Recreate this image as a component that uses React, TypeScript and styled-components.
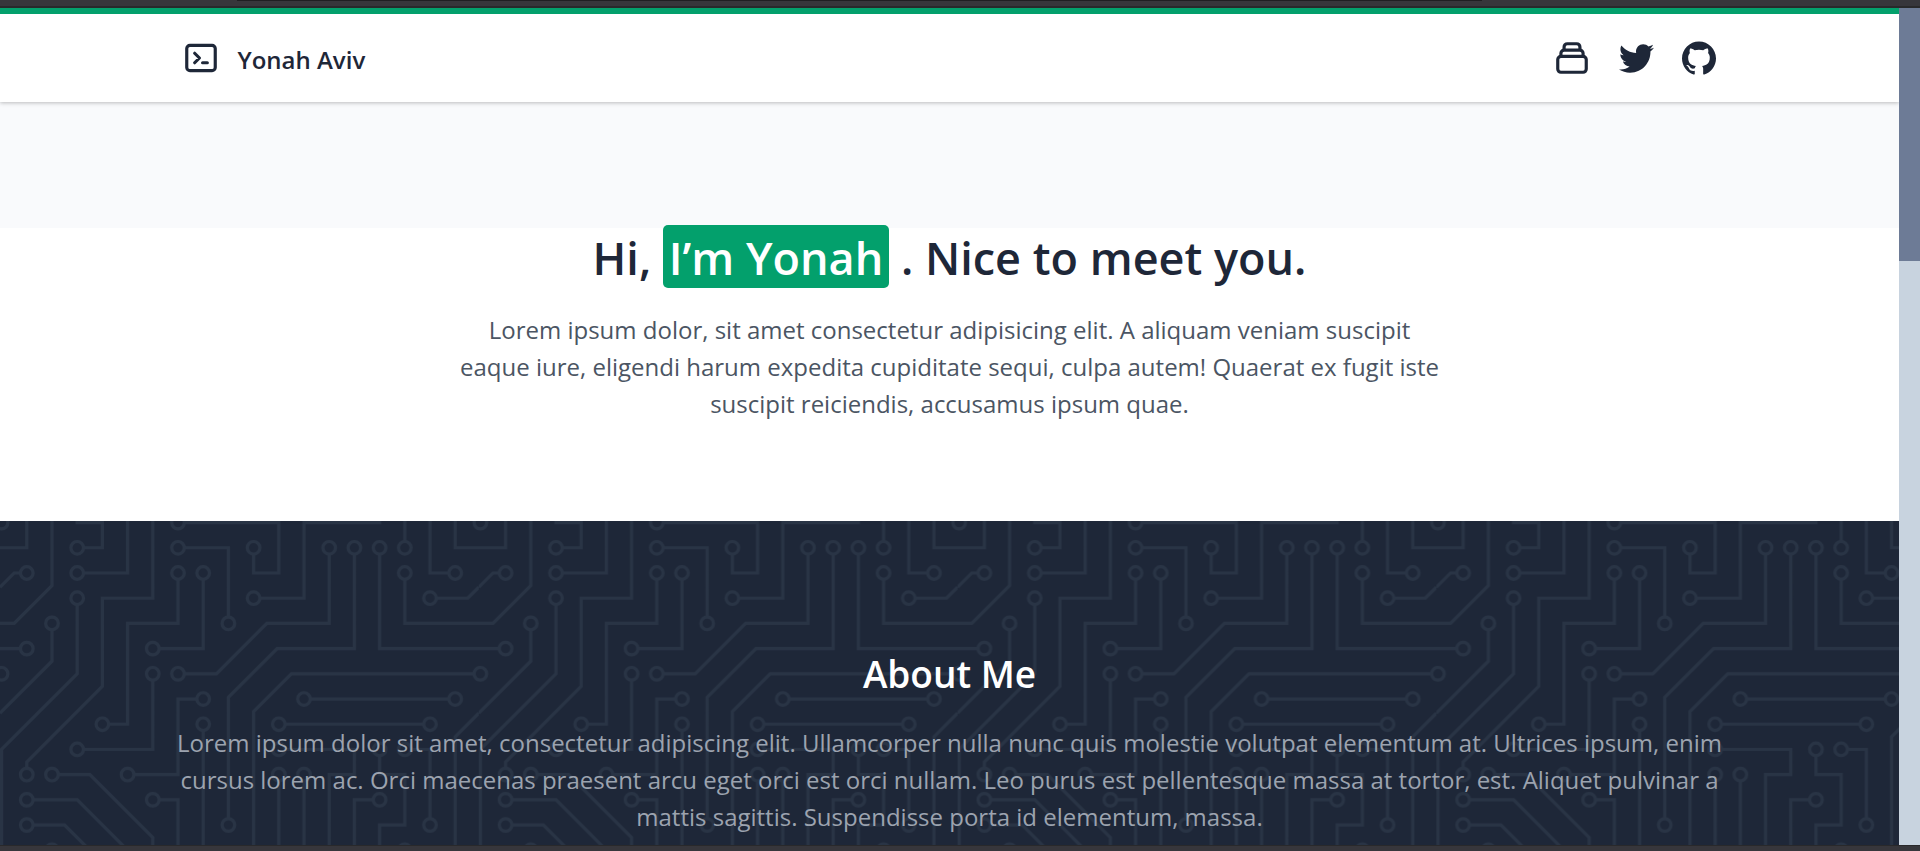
import React from "react";
import styled, { createGlobalStyle } from "styled-components";

const color = {
  chrome: "#37363b",
  chromeEdge: "#29292b",
  green: "#03a06c",
  ink: "#1e2738",
  trace: "#293445",
  body: "#4b5563",
  muted: "#9ca3af",
  pale: "#f9fafc",
  thumb: "#6d7b96",
  track: "#c8d3df",
};

const GlobalStyle = createGlobalStyle`
  * { box-sizing: border-box; }
  body {
    margin: 0;
    background: #ffffff;
    color: ${color.ink};
    font-family: "Segoe UI", "Open Sans", "Noto Sans", sans-serif;
  }
  h1, h2, p { margin: 0; }
`;

const Shell = styled.div`
  display: flex;
  flex-direction: column;
  height: 100vh;
  overflow: hidden;
`;

const TopEdge = styled.div`
  flex: none;
  height: 8px;
  padding: 0 438px 0 237px;
  background: ${color.chrome};
  border-bottom: 2px solid ${color.chromeEdge};
`;

const TopEdgeLine = styled.div`
  height: 1px;
  background: #1f1f22;
`;

const BottomEdge = styled.div`
  flex: none;
  height: 6px;
  background: ${color.chrome};
  border-top: 1px solid ${color.chromeEdge};
`;

const Viewport = styled.div`
  display: flex;
  flex: 1;
  min-height: 0;
`;

const Page = styled.div`
  display: flex;
  flex-direction: column;
  flex: 1;
  min-width: 0;
  overflow: hidden;
  background: #ffffff;
`;

const ScrollTrack = styled.div`
  flex: none;
  width: 21px;
  background: ${color.track};
`;

const ScrollThumb = styled.div`
  height: 253px;
  background: ${color.thumb};
`;

const Header = styled.header`
  position: relative;
  z-index: 1;
  flex: none;
  border-top: 6px solid ${color.green};
  background: #ffffff;
  box-shadow: 0 1px 4px rgba(0, 0, 0, 0.25);
`;

const HeaderRow = styled.div`
  display: flex;
  align-items: center;
  justify-content: space-between;
  width: 100%;
  max-width: 1536px;
  height: 88px;
  margin: 0 auto;
  padding-right: 2px;
`;

const Brand = styled.a`
  display: flex;
  align-items: center;
  gap: 18px;
  color: inherit;
  text-decoration: none;
`;

const BrandName = styled.span`
  padding-top: 3px;
  font-size: 24px;
  font-weight: 600;
  line-height: 36px;
`;

const Links = styled.nav`
  display: flex;
  align-items: center;
  gap: 28px;
`;

const IconLink = styled.a`
  display: flex;
  color: inherit;
`;

const OutlineIcon = styled.svg`
  width: 38px;
  height: 38px;
  fill: none;
  stroke: currentColor;
  stroke-width: 2;
  stroke-linecap: round;
  stroke-linejoin: round;
`;

const LogoIcon = styled.svg<{ $size: number }>`
  width: ${({ $size }) => $size}px;
  height: ${({ $size }) => $size}px;
  fill: currentColor;
`;

const Spacer = styled.div`
  flex: none;
  height: 126px;
  background: ${color.pale};
`;

const Hero = styled.section`
  flex: none;
  padding: 0 24px 99px;
  text-align: center;
`;

const HeroTitle = styled.h1`
  font-size: 45px;
  font-weight: 600;
  line-height: 60px;
`;

const Highlight = styled.span`
  padding: 2px 6px 0;
  border-radius: 5px;
  background: ${color.green};
  color: #ffffff;
`;

const HeroText = styled.p`
  max-width: 980px;
  margin: 23px auto 0;
  color: ${color.body};
  font-size: 24px;
  line-height: 37px;
`;

const About = styled.section`
  position: relative;
  flex: 1 0 auto;
  padding: 128px 24px 0;
  background: ${color.ink};
  text-align: center;
`;

const Backdrop = styled.svg`
  position: absolute;
  inset: 0;
  width: 100%;
  height: 100%;
`;

const AboutContent = styled.div`
  position: relative;
  width: 100%;
  max-width: 1560px;
  margin: 0 auto;
`;

const AboutTitle = styled.h2`
  color: #ffffff;
  font-size: 37px;
  font-weight: 600;
  line-height: 50px;
`;

const AboutText = styled.p`
  margin-top: 25px;
  color: ${color.muted};
  font-size: 24px;
  line-height: 37px;
`;

// Pads sit on a 16 unit grid inside a 304 unit tile: [column, row].
const pads: [number, number][] = [
  [0, 0], [19, 0], [7, 0], [0, 19], [19, 19], [7, 19],
  [3, 1], [7, 1], [10, 1], [13, 1], [14, 1], [15, 1], [16, 1],
  [1, 2], [3, 2], [7, 2], [8, 2], [16, 2], [18, 2],
  [3, 3], [10, 3], [17, 3], [2, 4], [9, 4], [1, 5], [6, 5],
  [0, 6], [6, 6], [7, 6], [19, 6], [8, 7], [12, 7], [18, 7],
  [4, 8], [8, 8], [11, 8], [17, 8],
  [3, 9], [11, 9], [15, 9], [16, 9],
  [1, 10], [2, 10], [5, 10], [11, 10], [12, 10],
  [1, 11], [6, 11], [15, 11], [1, 12], [9, 12], [17, 12],
  [2, 13], [16, 13],
  [3, 14], [8, 14], [9, 14], [10, 14], [12, 14], [16, 14],
  [3, 15], [7, 15], [12, 15], [16, 15], [3, 16], [13, 16],
  [13, 17], [4, 18], [14, 18],
];

// Copper traces between the pads, as centre lines.
const traces = [
  "M49 225H0 M209 273H81 M257 225H304 M257 241H304",
  "M273 129H177 M17 81H0 M193 113H289 M257 17V0",
  "M193 225V161 M241 17V81H304 M257 33V65H304",
  "M129 129V209H145V225 M129 113H113V161H81",
  "M113 241H177V161 M97 177H113V225H129",
  "M65 289V273H49V304 M241 177H225V273H273V304",
  "M257 145H273V193 M193 241H209V161H225V145H177",
  "M289 33H273V0 M97 97V145H49 M49 33H81V0",
  "M113 33V65H81V129H65 M97 81H129V33 M113 17H145V65",
  "M225 289H97V304 M241 145V161H257V193H241V257H289V304",
  "M49 17H65V1H48 M161 49H193V1H242 M113 1H177V33H161V17",
  "M113 97H137.4L169.4 65H209V17 M145 193V112L176 81H225V17",
  "M161 225V121L185 97H304 M17 161V153L65 105V49H97V0",
  "M49 49V97L1 145V209H33 M33 65V89L0 122",
  "M17 33H9L0 42 M273 49H297L304 42 M257 209H289V137L304 122",
  "M49 241H65V217L41 193H17 M209 257H97V201L57 161H33",
  "M49 257H81V209L49 177H17 M33 0V41L9 65H0",
  "M1 304V257H17V304 M33 304V241H0 M0 17H17V0",
  "M304 17H289V0 M257 304V289H241V304 M81 272V304",
].join(" ");

function CircuitBackdrop() {
  return (
    <Backdrop aria-hidden="true">
      <defs>
        <pattern
          id="circuit"
          width="304"
          height="304"
          patternUnits="userSpaceOnUse"
          patternTransform="scale(1.575)"
        >
          <g stroke={color.trace} strokeWidth="2">
            <path d={traces} fill="none" />
            {pads.map(([col, row]) => (
              <circle
                key={`${col}-${row}`}
                cx={col * 16 + 1}
                cy={row * 16 + 1}
                r="4"
                fill={color.ink}
              />
            ))}
          </g>
        </pattern>
      </defs>
      <rect width="100%" height="100%" fill="url(#circuit)" />
    </Backdrop>
  );
}

export default function App() {
  return (
    <>
      <GlobalStyle />
      <Shell>
        <TopEdge>
          <TopEdgeLine />
        </TopEdge>
        <Viewport>
          <Page>
            <Header>
              <HeaderRow>
                <Brand href="#">
                  <OutlineIcon viewBox="0 0 24 24" aria-hidden="true">
                    <path d="M8 9l3 3-3 3m5 0h3M5 20h14a2 2 0 002-2V6a2 2 0 00-2-2H5a2 2 0 00-2 2v12a2 2 0 002 2z" />
                  </OutlineIcon>
                  <BrandName>Yonah Aviv</BrandName>
                </Brand>
                <Links>
                  <IconLink href="#projects" aria-label="Projects">
                    <OutlineIcon viewBox="0 0 24 24" aria-hidden="true">
                      <path d="M19 11H5m14 0a2 2 0 012 2v6a2 2 0 01-2 2H5a2 2 0 01-2-2v-6a2 2 0 012-2m14 0V9a2 2 0 00-2-2M5 11V9a2 2 0 012-2m0 0V5a2 2 0 012-2h6a2 2 0 012 2v2M7 7h10" />
                    </OutlineIcon>
                  </IconLink>
                  <IconLink href="#twitter" aria-label="Twitter">
                    <LogoIcon $size={35} viewBox="0 0 24 24" aria-hidden="true">
                      <path d="M23.954 4.569c-.885.389-1.83.654-2.825.775 1.014-.611 1.794-1.574 2.163-2.723-.951.555-2.005.959-3.127 1.184-.896-.959-2.173-1.559-3.591-1.559-2.717 0-4.92 2.203-4.92 4.917 0 .39.045.765.127 1.124C7.691 8.094 4.066 6.13 1.64 3.161c-.427.722-.666 1.561-.666 2.475 0 1.71.87 3.213 2.188 4.096-.807-.026-1.566-.248-2.228-.616v.061c0 2.385 1.693 4.374 3.946 4.827-.413.111-.849.171-1.296.171-.314 0-.615-.03-.916-.086.631 1.953 2.445 3.377 4.604 3.417-1.68 1.319-3.809 2.105-6.102 2.105-.39 0-.779-.023-1.17-.067 2.189 1.394 4.768 2.209 7.557 2.209 9.054 0 13.999-7.496 13.999-13.986 0-.209 0-.42-.015-.63.961-.689 1.8-1.56 2.46-2.548l-.047-.02z" />
                    </LogoIcon>
                  </IconLink>
                  <IconLink href="#github" aria-label="GitHub">
                    <LogoIcon $size={34} viewBox="0 0 24 24" aria-hidden="true">
                      <path d="M12 .297c-6.63 0-12 5.373-12 12 0 5.303 3.438 9.8 8.205 11.385.6.113.82-.258.82-.577 0-.285-.01-1.04-.015-2.04-3.338.724-4.042-1.61-4.042-1.61C4.422 18.07 3.633 17.7 3.633 17.7c-1.087-.744.084-.729.084-.729 1.205.084 1.838 1.236 1.838 1.236 1.07 1.835 2.809 1.305 3.495.998.108-.776.417-1.305.76-1.605-2.665-.3-5.466-1.332-5.466-5.93 0-1.31.465-2.38 1.235-3.22-.135-.303-.54-1.523.105-3.176 0 0 1.005-.322 3.3 1.23.96-.267 1.98-.399 3-.405 1.02.006 2.04.138 3 .405 2.28-1.552 3.285-1.23 3.285-1.23.645 1.653.24 2.873.12 3.176.765.84 1.23 1.91 1.23 3.22 0 4.61-2.805 5.625-5.475 5.92.42.36.81 1.096.81 2.22 0 1.606-.015 2.896-.015 3.286 0 .315.21.69.825.57C20.565 22.092 24 17.592 24 12.297c0-6.627-5.373-12-12-12" />
                    </LogoIcon>
                  </IconLink>
                </Links>
              </HeaderRow>
            </Header>
            <Spacer />
            <Hero>
              <HeroTitle>
                Hi, <Highlight>I’m Yonah</Highlight> . Nice to meet you.
              </HeroTitle>
              <HeroText>
                Lorem ipsum dolor, sit amet consectetur adipisicing elit. A
                aliquam veniam suscipit eaque iure, eligendi harum expedita
                cupiditate sequi, culpa autem! Quaerat ex fugit iste suscipit
                reiciendis, accusamus ipsum quae.
              </HeroText>
            </Hero>
            <About>
              <CircuitBackdrop />
              <AboutContent>
                <AboutTitle>About Me</AboutTitle>
                <AboutText>
                  Lorem ipsum dolor sit amet, consectetur adipiscing elit.
                  Ullamcorper nulla nunc quis molestie volutpat elementum at.
                  Ultrices ipsum, enim cursus lorem ac. Orci maecenas praesent
                  arcu eget orci est orci nullam. Leo purus est pellentesque
                  massa at tortor, est. Aliquet pulvinar a mattis sagittis.
                  Suspendisse porta id elementum, massa.
                </AboutText>
              </AboutContent>
            </About>
          </Page>
          <ScrollTrack>
            <ScrollThumb />
          </ScrollTrack>
        </Viewport>
        <BottomEdge />
      </Shell>
    </>
  );
}
